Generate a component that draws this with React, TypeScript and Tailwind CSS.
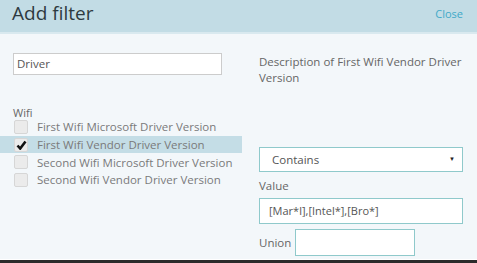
import React from 'react';

const options = [
    { label: 'First Wifi Microsoft Driver Version', checked: false },
    { label: 'First Wifi Vendor Driver Version', checked: true },
    { label: 'Second Wifi Microsoft Driver Version', checked: false },
    { label: 'Second Wifi Vendor Driver Version', checked: false },
];

export default function App() {
    return (
        <div className="w-[477px] h-[263px] flex flex-col bg-[#2b2b2b] overflow-hidden font-['Open_Sans',sans-serif]">
            {/* Header */}
            <div className="h-[34px] shrink-0 bg-[#c2dce5] border-b-2 border-[#d9e9ef] flex items-center justify-between pl-[12px] pr-[14px]">
                <span className="text-[19px] text-[#2e3a40] leading-none -mt-[5px]">Add filter</span>
                <span className="text-[11px] text-[#3fa9c8] -mt-[4px]">Close</span>
            </div>

            {/* Body */}
            <div className="h-[226px] shrink-0 bg-[#f3f7fa] border-b border-white flex">
                {/* Left column */}
                <div className="w-[242px] shrink-0 flex flex-col pt-[19px]">
                    <div className="ml-[13px] w-[209px] h-[22px] bg-white border border-[#cccccc] flex items-center px-[3px] text-[11.5px] text-[#555]">
                        Driver
                    </div>
                    <div className="ml-[13px] mt-[31px] text-[11px] text-[#666] leading-[14px]">Wifi</div>
                    <div className="flex flex-col -mt-[2px]">
                        {options.map((o) => (
                            <div
                                key={o.label}
                                className={
                                    'h-[17.7px] flex items-center pl-[14px] ' +
                                    (o.checked ? 'bg-[#c4dde6]' : '')
                                }
                            >
                                <span className="w-[14px] h-[14px] rounded-[2px] border border-[#d6d6d6] bg-[#ebebeb] flex items-center justify-center">
                                    {o.checked && (
                                        <svg width="11" height="10" viewBox="0 0 11 10">
                                            <path d="M1.5 5.5 L4.2 8.5 L9.5 1.5" fill="none" stroke="#111" strokeWidth="2.6" />
                                        </svg>
                                    )}
                                </span>
                                <span className="ml-[9px] text-[11.5px] text-[#7a7a7a] whitespace-nowrap">{o.label}</span>
                            </div>
                        ))}
                    </div>
                </div>

                {/* Right column */}
                <div className="flex-1 flex flex-col pl-[17px] pr-[14px] pt-[20px]">
                    <div className="text-[11.5px] leading-[16px] text-[#666] w-[205px]">
                        Description of First Wifi Vendor Driver Version
                    </div>
                    <div className="mt-[61px] w-[204px] h-[25px] bg-white border border-[#8fc9cb] flex items-center justify-between pl-[12px] pr-[7px] text-[11.5px] text-[#555]">
                        <span>Contains</span>
                        <span className="text-[6px] text-[#222]">▼</span>
                    </div>
                    <div className="mt-[2px] text-[11.5px] text-[#666] leading-[24px]">Value</div>
                    <div className="w-[204px] h-[26px] bg-white border border-[#8fc9cb] flex items-center pl-[9px] text-[11px] text-[#555]">
                        [Mar*l],[Intel*],[Bro*]
                    </div>
                    <div className="mt-[5px] flex items-center">
                        <span className="text-[11.5px] text-[#666] w-[36px]">Union</span>
                        <div className="w-[120px] h-[27px] bg-white border border-[#8fc9cb]" />
                    </div>
                </div>
            </div>
        </div>
    );
}
